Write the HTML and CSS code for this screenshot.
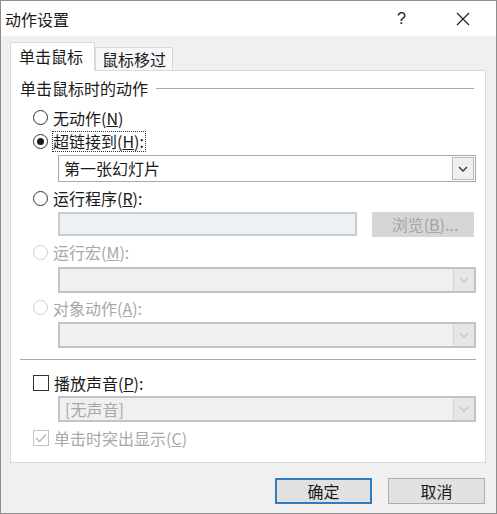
FILE: index.html
```html
<!DOCTYPE html>
<html lang="zh-CN">
<head>
    <meta charset="UTF-8">
    <title>动作设置</title>
    <link rel="stylesheet" href="styles.css">
</head>
<body>
    <div class="window">
        <div class="titlebar">
            <span class="title">动作设置</span>
            <span class="help">?</span>
            <span class="close">
                <svg width="14" height="14" viewBox="0 0 14 14"><path d="M1 1L13 13M13 1L1 13" stroke="#222" stroke-width="1.2" fill="none"/></svg>
            </span>
        </div>
        <div class="main">
            <div class="tabs">
                <div class="tab active">单击鼠标</div>
                <div class="tab">鼠标移过</div>
            </div>
            <div class="panel">
                <div class="group-head"><span>单击鼠标时的动作</span><i class="rule"></i></div>

                <div class="opt row-none"><span class="radio"></span>无动作(<u>N</u>)</div>
                <div class="opt row-link"><span class="radio on"></span><span class="focus">超链接到(<u>H</u>):</span></div>
                <div class="select row-sel1">
                    <span class="val">第一张幻灯片</span>
                    <span class="drop"><svg width="10" height="6" viewBox="0 0 10 6"><path d="M1 1L5 5L9 1" stroke="#333" stroke-width="1.3" fill="none"/></svg></span>
                </div>

                <div class="opt row-prog"><span class="radio"></span>运行程序(<u>R</u>):</div>
                <div class="field-row">
                    <div class="input"></div>
                    <div class="browse">浏览(<u>B</u>)...</div>
                </div>

                <div class="opt off row-macro"><span class="radio"></span>运行宏(<u>M</u>):</div>
                <div class="select dis">
                    <span class="val"></span>
                    <span class="drop"><svg width="10" height="6" viewBox="0 0 10 6"><path d="M1 1L5 5L9 1" stroke="#c4c8cc" stroke-width="1.3" fill="none"/></svg></span>
                </div>

                <div class="opt off row-obj"><span class="radio"></span>对象动作(<u>A</u>):</div>
                <div class="select dis">
                    <span class="val"></span>
                    <span class="drop"><svg width="10" height="6" viewBox="0 0 10 6"><path d="M1 1L5 5L9 1" stroke="#c4c8cc" stroke-width="1.3" fill="none"/></svg></span>
                </div>

                <div class="sep"></div>

                <div class="opt row-sound"><span class="check"></span>播放声音(<u>P</u>):</div>
                <div class="select dis">
                    <span class="val">[无声音]</span>
                    <span class="drop"><svg width="10" height="6" viewBox="0 0 10 6"><path d="M1 1L5 5L9 1" stroke="#c4c8cc" stroke-width="1.3" fill="none"/></svg></span>
                </div>

                <div class="opt off row-hl">
                    <span class="check on">
                        <svg width="12" height="10" viewBox="0 0 12 10"><path d="M1 5L4.5 8.5L11 1.5" stroke="#b8b8b8" stroke-width="1.4" fill="none"/></svg>
                    </span>单击时突出显示(<u>C</u>)
                </div>
            </div>
            <div class="footer">
                <div class="btn default">确定</div>
                <div class="btn">取消</div>
            </div>
        </div>
    </div>
</body>
</html>
```

FILE: styles.css
```css
body {
    margin: 0;
    font-family: "Noto Sans CJK SC", "Liberation Sans", sans-serif;
    font-size: 16px;
    color: #1a1a1a;
}
.window {
    width: 497px;
    height: 514px;
    box-sizing: border-box;
    border: 1px solid #8e8e8e;
    background: #f0f0f0;
    display: flex;
    flex-direction: column;
}
.titlebar {
    height: 35px;
    background: #fff;
    display: flex;
    align-items: center;
    padding-left: 4px;
}
.title {
    flex: 1;
    font-size: 16px;
}
.help {
    font-family: "Liberation Sans", sans-serif;
    font-size: 16px;
    width: 14px;
    margin-right: 45px;
}
.close {
    display: flex;
    margin-right: 26px;
}
.main {
    padding: 7px 10px 0 9px;
}
.tabs {
    display: flex;
    align-items: flex-end;
    height: 27px;
}
.tab {
    height: 23px;
    line-height: 22px;
    box-sizing: border-box;
    padding: 0 6px;
    border: 1px solid #d9d9d9;
    border-bottom: none;
    background: #f7f7f7;
}
.tab.active {
    height: 29px;
    line-height: 27px;
    padding: 0 8px;
    background: #fff;
    margin-bottom: -1px;
    position: relative;
    z-index: 1;
    width: 85px;
}
.panel {
    height: 393px;
    box-sizing: border-box;
    border: 1px solid #d9d9d9;
    background: #fff;
    padding: 0 9px 0 9px;
}
.group-head {
    height: 34px;
    display: flex;
    align-items: center;
    gap: 8px;
}
.group-head .rule {
    flex: 1;
    height: 1px;
    background: #a8a8a8;
    margin-right: 2px;
}
.opt {
    display: flex;
    align-items: center;
    padding-left: 13px;
    white-space: nowrap;
}
.opt u {
    text-decoration-thickness: 1px;
}
.opt.off {
    color: #a8a8a8;
}
.row-none { height: 25px; }
.row-link { height: 22px; }
.row-prog { height: 28px; margin-top: 2px; }
.row-macro { height: 30px; }
.row-obj { height: 29px; }
.row-sound { height: 26px; margin-top: 10px; }
.row-hl { height: 32px; }
.radio {
    width: 13px;
    height: 13px;
    border: 1px solid #333;
    border-radius: 50%;
    margin-right: 5px;
    display: flex;
    align-items: center;
    justify-content: center;
    box-sizing: content-box;
}
.radio.on::after {
    content: "";
    width: 7px;
    height: 7px;
    border-radius: 50%;
    background: #1a1a1a;
}
.off .radio {
    border-color: #cfcfcf;
}
.focus {
    outline: 1px dotted #333;
    outline-offset: 0;
    line-height: 19px;
    padding-right: 1px;
}
.check {
    width: 14px;
    height: 14px;
    border: 1px solid #333;
    margin-right: 5px;
    display: flex;
    align-items: center;
    justify-content: center;
}
.off .check {
    border-color: #c4c4c4;
}
.select {
    height: 27px;
    box-sizing: border-box;
    margin-left: 38px;
    border: 1px solid #a9a9a9;
    background: #fff;
    display: flex;
    align-items: stretch;
}
.row-sel1 {
    margin-top: 3px;
}
.select .val {
    flex: 1;
    padding-left: 5px;
    line-height: 24px;
}
.select .drop {
    width: 20px;
    margin: 1px;
    border: 1px solid #b9b9b9;
    background: #f0f0f0;
    display: flex;
    align-items: center;
    justify-content: center;
}
.select.dis {
    height: 26px;
    border: 2px solid #c0c4c8;
    background: #eff0f1;
    color: #a8a8a8;
}
.select.dis .val {
    line-height: 22px;
}
.select.dis .drop {
    margin: 0;
    border: none;
    border-left: 1px solid #d4d7da;
    background: #e4e6e8;
}
.field-row {
    height: 25px;
    display: flex;
    gap: 15px;
    margin-left: 38px;
}
.input {
    width: 299px;
    height: 24px;
    box-sizing: border-box;
    border: 2px solid #c4ccd4;
    background: #f0f1f2;
}
.browse {
    width: 102px;
    height: 25px;
    background: #d6d6d6;
    color: #a4a4a4;
    text-align: center;
    line-height: 25px;
    box-sizing: border-box;
    padding-left: 4px;
}
.sep {
    height: 1px;
    background: #a8a8a8;
    margin-top: 11px;
    margin-right: 0;
}
.footer {
    display: flex;
    justify-content: flex-end;
    gap: 16px;
    margin-top: 15px;
    padding-right: 1px;
}
.btn {
    width: 97px;
    height: 26px;
    box-sizing: border-box;
    border: 1px solid #adadad;
    background: #e1e1e1;
    text-align: center;
    line-height: 24px;
}
.btn.default {
    border: 2px solid #2f7dbf;
    line-height: 22px;
}
```
